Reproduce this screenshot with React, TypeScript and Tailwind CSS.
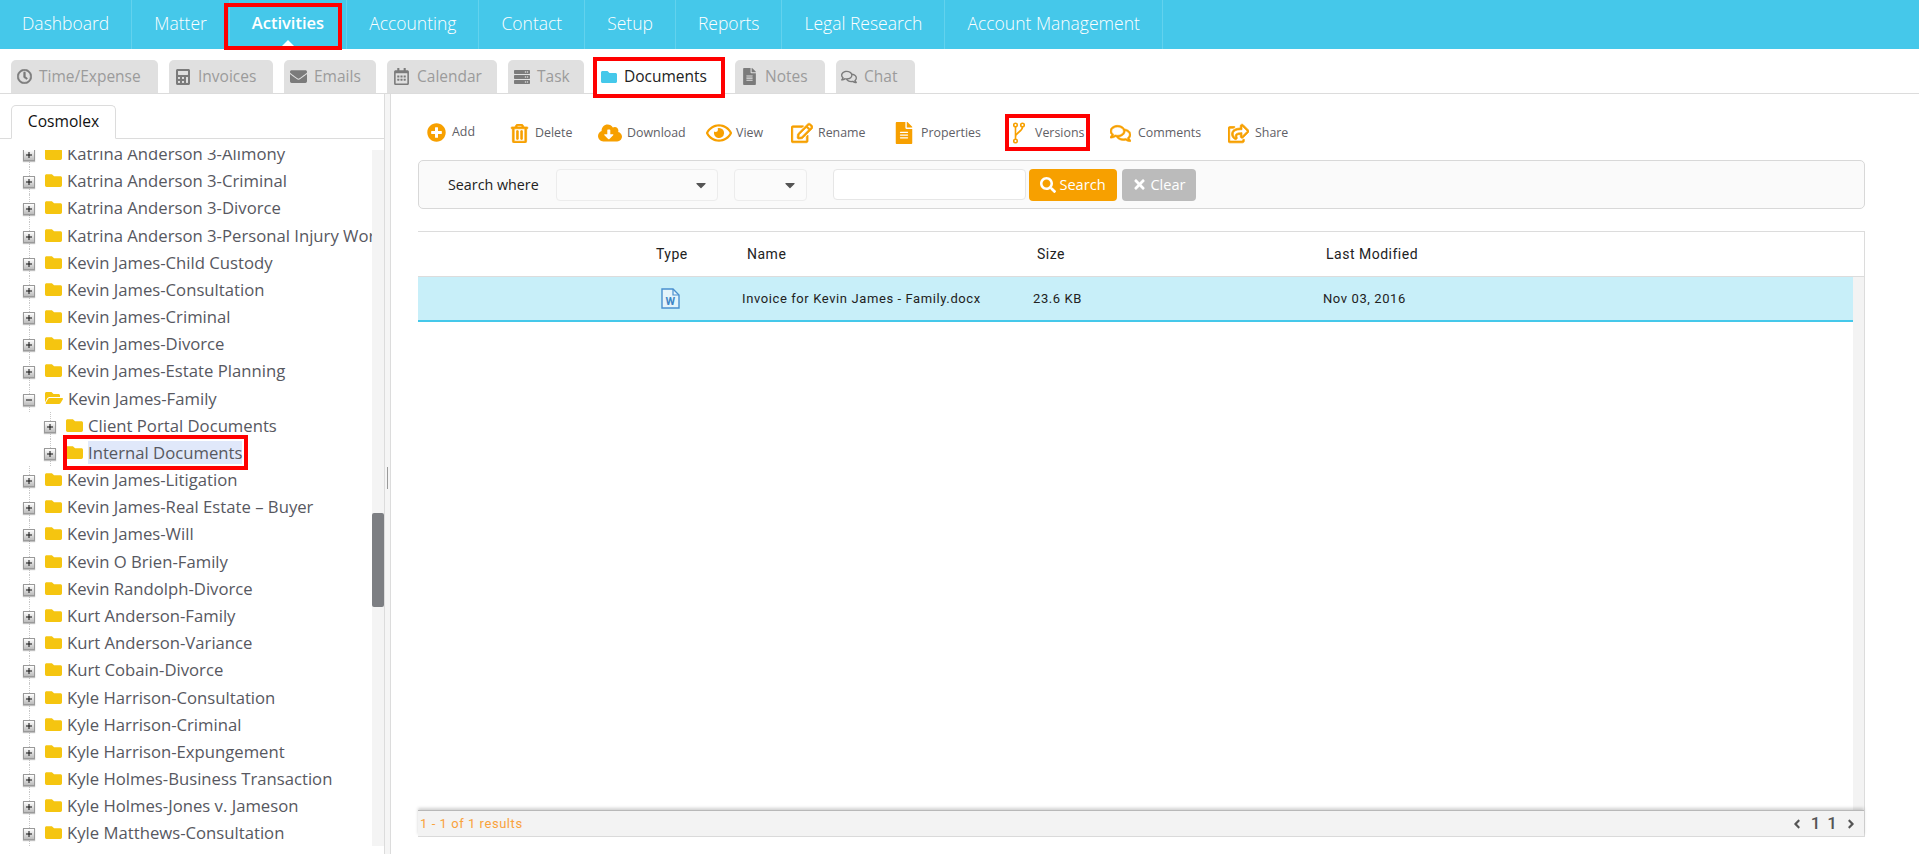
import {
  FaCalculator,
  FaCloudDownloadAlt,
  FaEnvelope,
  FaRegEye,
  FaFileAlt,
  FaFolder,
  FaFolderOpen,
  FaPlusCircle,
  FaRegCalendarAlt,
  FaRegClock,
  FaRegComments,
  FaRegEdit,
  FaRegShareSquare,
  FaRegTrashAlt,
  FaSearch,
  FaServer,
  FaTimes,
  FaCaretDown,
  FaAngleLeft,
  FaAngleRight,
} from "react-icons/fa";
import type { ReactNode } from "react";

const navItems = ["Dashboard", "Matter", "Activities", "Accounting", "Contact", "Setup", "Reports", "Legal Research", "Account Management"];

const subTabs = [
  { label: "Time/Expense", icon: <FaRegClock size={15} stroke="currentColor" strokeWidth={20} />, cls: "w-[147px]" },
  { label: "Invoices", icon: <FaCalculator size={16} />, cls: "w-[104px]" },
  { label: "Emails", icon: <FaEnvelope size={17} />, cls: "w-[92px]" },
  { label: "Calendar", icon: <FaRegCalendarAlt size={17} />, cls: "w-[110px]" },
  { label: "Task", icon: <FaServer size={16} />, cls: "w-[76px]" },
];

type Row = { name: string; level?: number; open?: boolean; selected?: boolean };

const rows: Row[] = [
  { name: "Katrina Anderson 3-Alimony" },
  { name: "Katrina Anderson 3-Criminal" },
  { name: "Katrina Anderson 3-Divorce" },
  { name: "Katrina Anderson 3-Personal Injury Workers Comp" },
  { name: "Kevin James-Child Custody" },
  { name: "Kevin James-Consultation" },
  { name: "Kevin James-Criminal" },
  { name: "Kevin James-Divorce" },
  { name: "Kevin James-Estate Planning" },
  { name: "Kevin James-Family", open: true },
  { name: "Client Portal Documents", level: 1 },
  { name: "Internal Documents", level: 1, selected: true },
  { name: "Kevin James-Litigation" },
  { name: "Kevin James-Real Estate – Buyer" },
  { name: "Kevin James-Will" },
  { name: "Kevin O Brien-Family" },
  { name: "Kevin Randolph-Divorce" },
  { name: "Kurt Anderson-Family" },
  { name: "Kurt Anderson-Variance" },
  { name: "Kurt Cobain-Divorce" },
  { name: "Kyle Harrison-Consultation" },
  { name: "Kyle Harrison-Criminal" },
  { name: "Kyle Harrison-Expungement" },
  { name: "Kyle Holmes-Business Transaction" },
  { name: "Kyle Holmes-Jones v. Jameson" },
  { name: "Kyle Matthews-Consultation" },
];

const Toggle = ({ open }: { open?: boolean }) => (
  <span className="flex h-[12px] w-[12px] shrink-0 items-center justify-center border border-[#9a9a9a] bg-gradient-to-b from-white to-[#bcbcbc] shadow-[0_1px_1px_rgba(0,0,0,0.25)]">
    <svg width="6" height="6" viewBox="0 0 6 6">
      <rect x="0" y="2.5" width="6" height="1" fill="#111" />
      {!open && <rect x="2.5" y="0" width="1" height="6" fill="#111" />}
    </svg>
  </span>
);

const TreeRow = ({ row }: { row: Row }) => {
  const child = row.level === 1;
  return (
    <div className={`relative flex h-[27.18px] items-center whitespace-nowrap ${child ? "pl-[44px]" : "pl-[23px]"}`}>
      <span className={`absolute top-0 bottom-0 border-l border-dotted border-[#c8c8c8] ${child ? "left-[50px]" : "left-[29px]"}`} />
      <span className="relative mt-[3px]">
        <Toggle open={row.open} />
      </span>
      <span className="relative ml-[10px] flex h-[23px] items-center">
        {row.selected && <span className="pointer-events-none absolute -top-[6px] -bottom-[6px] -left-[3px] -right-[6px] z-10 border-[4px] border-[#f00]" />}
        <span className="text-[#f5c510]">{row.open ? <FaFolderOpen size={18} /> : <FaFolder size={17} />}</span>
        <span className={`ml-[5px] text-[16.7px] leading-[23px] text-[#57585f] ${row.selected ? "bg-[#e0e8fa]" : ""}`}>{row.name}</span>
      </span>
    </div>
  );
};

const Tool = ({ icon, label, cls }: { icon: ReactNode; label: string; cls: string }) => (
  <div className={`flex items-center ${cls}`}>
    {icon}
    <span className="text-[12.4px] text-[#5f6066]">{label}</span>
  </div>
);

const Select = ({ cls }: { cls: string }) => (
  <div className={`flex h-[32px] items-center justify-end rounded-[4px] border border-[#ececec] bg-[#fbfbfb] pr-[8px] text-[#555] ${cls}`}>
    <FaCaretDown size={16} />
  </div>
);

export default function App() {
  return (
    <div className="flex h-[854px] flex-col overflow-hidden bg-white font-['Open_Sans',sans-serif]">
      <nav className="flex h-[49px] shrink-0 bg-[#45c8ea]">
        {navItems.map((n) => (
          <div
            key={n}
            className={`relative flex items-center border-r border-[#62d2ee] px-[22px] pb-[2px] text-white ${n === "Activities" ? "text-[16.5px] font-semibold" : "text-[17.5px] font-light"}`}
          >
            {n}
            {n === "Activities" && (
              <>
                <span className="absolute bottom-0 left-1/2 h-0 w-0 -translate-x-1/2 border-x-[9px] border-b-[9px] border-x-transparent border-b-white" />
                <span className="pointer-events-none absolute top-[3px] -bottom-[1px] -left-[6px] right-[4px] border-[4px] border-[#f00]" />
              </>
            )}
          </div>
        ))}
      </nav>

      <div className="mt-[11px] flex h-[34px] shrink-0 gap-[11px] border-b border-[#dcdcdc] pl-[11px]">
        {subTabs.map((t) => (
          <div key={t.label} className={`flex h-[33px] items-center gap-[7px] rounded-t-[5px] bg-[#e0e0e0] pl-[6px] text-[15.5px] text-[#9b9b9b] ${t.cls}`}>
            <span className="text-[#7b7b7b]">{t.icon}</span>
            {t.label}
          </div>
        ))}
        <div className="relative -ml-[2px] flex h-[34px] w-[132px] items-center gap-[7px] bg-white pl-[8px] text-[15.5px] text-[#222]">
          <span className="pointer-events-none absolute -top-[3px] -bottom-[4px] left-0 right-0 border-[4px] border-[#f00]" />
          <FaFolder size={16} className="text-[#45c8ea]" />
          Documents
        </div>
        <div className="-ml-[1px] flex h-[33px] w-[90px] items-center gap-[7px] rounded-t-[5px] bg-[#e0e0e0] pl-[6px] text-[15.5px] text-[#9b9b9b]">
          <FaFileAlt size={17} className="text-[#7b7b7b]" />
          Notes
        </div>
        <div className="flex h-[33px] w-[79px] items-center gap-[7px] rounded-t-[5px] bg-[#e0e0e0] pl-[5px] text-[15.5px] text-[#9b9b9b]">
          <FaRegComments size={16} className="text-[#7b7b7b]" />
          Chat
        </div>
      </div>

      <div className="flex min-h-0 flex-1">
        <aside className="flex w-[384px] shrink-0 flex-col overflow-hidden">
          <div className="flex h-[45px] shrink-0 items-end border-b border-[#dcdcdc] pl-[11px]">
            <div className="-mb-px flex h-[34px] w-[105px] items-center justify-center rounded-t-[5px] border border-b-white border-[#dcdcdc] bg-white text-[15.6px] text-[#111]">
              Cosmolex
            </div>
          </div>
          <div className="mb-[8px] mt-[11px] flex min-h-0 flex-1">
            <div className="min-w-0 flex-1 overflow-hidden">
              <div className="-mt-[10px]">
                {rows.map((r) => (
                  <TreeRow key={r.name} row={r} />
                ))}
              </div>
            </div>
            <div className="w-[12px] shrink-0 bg-[#f4f4f4] pt-[363px]">
              <div className="h-[94px] rounded-[2px] bg-[#7d7f83]" />
            </div>
          </div>
        </aside>

        <div className="flex w-[7px] shrink-0 items-start justify-center border-x border-[#dcdcdc] bg-[#f5f5f5] pt-[373px]">
          <div className="h-[22px] w-[1px] bg-[#9a9a9a]" />
        </div>

        <main className="min-w-0 flex-1 pl-[27px] pr-[54px]">
          <div className="flex h-[66px] items-center pt-[12px]">
            <Tool cls="w-[91px] -mt-[2px] pl-[9px] gap-[6px]" label="Add" icon={<FaPlusCircle size={19} className="text-[#f7a000]" />} />
            <Tool cls="w-[89px] pl-[1px] gap-[6px]" label="Delete" icon={<FaRegTrashAlt size={19} strokeWidth={20} stroke="currentColor" className="text-[#f7a000]" />} />
            <Tool cls="w-[108px] gap-[5px]" label="Download" icon={<FaCloudDownloadAlt size={24} className="text-[#f7a000]" />} />
            <Tool cls="w-[85px] gap-[4px]" label="View" icon={<FaRegEye size={26} className="text-[#f7a000]" />} />
            <Tool cls="w-[102px] gap-[5px]" label="Rename" icon={<FaRegEdit size={22} strokeWidth={15} stroke="currentColor" className="text-[#f7a000]" />} />
            <Tool cls="w-[118px] gap-[6px]" label="Properties" icon={<FaFileAlt size={22} className="text-[#f7a000]" />} />
            <div className="relative flex w-[99px] items-center gap-[10px] pl-[2px]">
              <span className="pointer-events-none absolute -top-[8px] -bottom-[7px] -left-[6px] right-[20px] border-[4px] border-[#f00]" />
              <svg width="12" height="22" viewBox="0 0 12 22" fill="none" stroke="#f7a000" strokeWidth="1.6">
                <circle cx="2.5" cy="3" r="1.8" />
                <circle cx="2.5" cy="19" r="1.8" />
                <circle cx="9.5" cy="3" r="1.8" />
                <path d="M2.5 5v12M9.5 5c0 5-7 5-7 10" />
              </svg>
              <span className="text-[12.4px] text-[#5f6066]">Versions</span>
            </div>
            <Tool cls="w-[118px] gap-[7px]" label="Comments" icon={<FaRegComments size={21} strokeWidth={15} stroke="currentColor" className="text-[#f7a000]" />} />
            <Tool cls="gap-[6px]" label="Share" icon={<FaRegShareSquare size={21} strokeWidth={20} stroke="currentColor" className="text-[#f7a000]" />} />
          </div>

          <div className="flex h-[49px] items-center rounded-[5px] border border-[#d8d8d8] bg-[#fafafa] pl-[29px]">
            <span className="w-[108px] text-[14.3px] text-[#222]">Search where</span>
            <Select cls="w-[162px]" />
            <Select cls="ml-[16px] w-[73px]" />
            <div className="ml-[26px] h-[31px] w-[193px] rounded-[4px] border border-[#e6e6e6] bg-white" />
            <button className="ml-[3px] flex h-[32px] w-[88px] items-center justify-center gap-[3px] rounded-[4px] bg-[#f7a000] text-[14.6px] text-white">
              <FaSearch size={16} />
              Search
            </button>
            <button className="ml-[5px] flex h-[32px] w-[74px] items-center justify-center gap-[3px] rounded-[4px] bg-[#bbbbbb] text-[14.6px] text-white">
              <FaTimes size={15} />
              Clear
            </button>
          </div>

          <div className="mt-[22px] flex h-[606px] flex-col border-y border-r border-[#dcdcdc] font-['Roboto',sans-serif]">
            <div className="grid h-[45px] shrink-0 grid-cols-[238px_91px_290px_289px_1fr] items-center border-b border-[#dcdcdc] text-[14px] tracking-[0.5px] text-[#222]">
              <span />
              <span>Type</span>
              <span>Name</span>
              <span>Size</span>
              <span>Last Modified</span>
            </div>
            <div className="flex min-h-0 flex-1">
              <div className="min-w-0 flex-1">
                <div className="grid h-[45px] grid-cols-[243px_81px_291px_290px_1fr] items-center border-b-2 border-[#45c8ea] bg-[#c8eff9] text-[13px] tracking-[0.6px] text-[#222]">
                  <span />
                  <svg width="19" height="21" viewBox="0 0 19 21" fill="none">
                    <path d="M1 1h11l6 6v13H1z" stroke="#4a90cf" strokeWidth="1.4" fill="#e4f4fb" />
                    <path d="M12 1v6h6" stroke="#4a90cf" strokeWidth="1.2" />
                    <text x="9.5" y="17" textAnchor="middle" fontSize="11" fontWeight="700" fill="#3f86c6" fontFamily="Roboto, sans-serif">W</text>
                  </svg>
                  <span className="whitespace-nowrap">Invoice for Kevin James - Family.docx</span>
                  <span>23.6 KB</span>
                  <span>Nov 03, 2016</span>
                </div>
              </div>
              <div className="w-[11px] shrink-0 bg-[#f3f3f3]" />
            </div>
            <div className="flex h-[26px] shrink-0 items-center justify-between border-t border-[#b8b8b8] bg-[#f3f3f3] pl-[2px] pr-[6px] shadow-[0_-2px_3px_rgba(0,0,0,0.18)]">
              <span className="text-[13px] tracking-[0.55px] text-[#f9a23c]">1 - 1 of 1 results</span>
              <span className="flex items-center gap-[7px] text-[17px] font-medium text-[#555]">
                <FaAngleLeft size={14} />
                <span>1</span>
                <span>1</span>
                <FaAngleRight size={14} />
              </span>
            </div>
          </div>
        </main>
      </div>
    </div>
  );
}
